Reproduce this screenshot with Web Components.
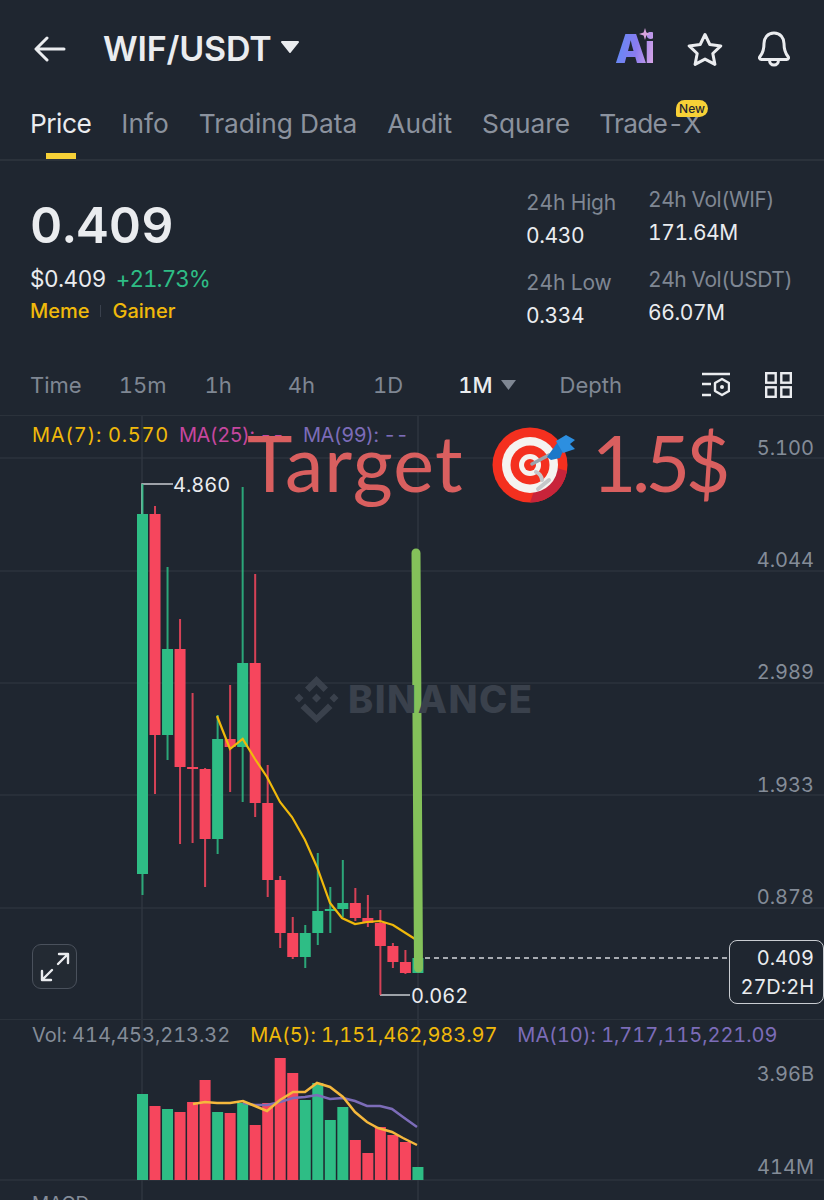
<!DOCTYPE html>
<html>
<head>
<meta charset="utf-8">
<style>
  html, body { margin: 0; height: 1200px; overflow: hidden; background: #1f2630; }
  body { font-family: Inter, "Liberation Sans", sans-serif; color: #eaecef; font-variant-numeric: tabular-nums; }
</style>
</head>
<body>
<market-header></market-header>
<market-tabs>
  <span class="on">Price</span><span>Info</span><span>Trading Data</span><span>Audit</span><span>Square</span><span class="tight">Trade-X</span>
</market-tabs>
<price-summary></price-summary>
<interval-bar></interval-bar>
<candle-chart></candle-chart>
<volume-chart></volume-chart>

<script>
class MarketHeader extends HTMLElement {
  connectedCallback() {
    this.attachShadow({ mode: "open" }).innerHTML = `
      <style>
        :host { display: flex; align-items: center; height: 97px; padding-left: 34px; box-sizing: border-box; }
        .title { font-size: 34px; font-weight: 600; margin-left: 37px; letter-spacing: -0.2px; }
        .caret { margin-left: 10px; margin-top: -3px; }
        .right { margin-left: auto; display: flex; align-items: center; padding-right: 33px; }
        .ai { position: relative; width: 38px; height: 34px; margin-right: 34px; }
        .ai b { display: block; font-size: 40px; line-height: 34px; font-weight: 900; letter-spacing: -2px;
          background: linear-gradient(100deg, #5b8cf5, #8a7bf0 55%, #d9a6e6); -webkit-background-clip: text; background-clip: text; color: transparent; }
        .ai svg { position: absolute; right: 2px; top: -4px; }
        svg { display: block; }
      </style>
      <svg width="32" height="26" viewBox="0 0 32 26" fill="none" stroke="#eaecef" stroke-width="3" stroke-linecap="round" stroke-linejoin="round"><path d="M30 13H3M13 2 2 13l11 11"/></svg>
      <span class="title">WIF/USDT</span>
      <svg class="caret" width="18" height="12" viewBox="0 0 18 12"><path d="M1 0h16a1 1 0 0 1 .8 1.6l-8 9.8a1 1 0 0 1-1.6 0L.2 1.6A1 1 0 0 1 1 0z" fill="#eaecef"/></svg>
      <div class="right">
        <div class="ai"><b>Ai</b><svg width="12" height="12" viewBox="0 0 12 12"><path d="M6 0l1.4 4.6L12 6 7.400 7.400 6 12 4.600 7.400 0 6l4.600-1.400z" fill="#d7a3dc"/></svg></div>
        <svg width="36" height="34" viewBox="0 0 36 34" fill="none" stroke="#eaecef" stroke-width="3" stroke-linejoin="round" style="margin-right:34px"><path d="M18 2.500l4.800 10 11 1.400-8 7.600 2.100 10.900L18 27.100 8.100 32.400l2.100-10.900-8-7.600 11-1.400z"/></svg>
        <svg width="34" height="36" viewBox="0 0 34 36" fill="none" stroke="#eaecef" stroke-width="3" stroke-linejoin="round" stroke-linecap="round"><path d="M17 2c-6.500 0-10 5-10 10.500 0 6.500-1.500 10-4 13-1 1.200-.5 3 1.500 3h25c2 0 2.500-1.800 1.500-3-2.500-3-4-6.500-4-13C27 7 23.500 2 17 2z"/><path d="M12.500 29c0 3 2 5 4.500 5s4.500-2 4.500-5"/></svg>
      </div>`;
  }
}
customElements.define("market-header", MarketHeader);

class MarketTabs extends HTMLElement {
  connectedCallback() {
    this.attachShadow({ mode: "open" }).innerHTML = `
      <style>
        :host { display: flex; gap: 30px; height: 64px; padding: 10px 0 0 30px; box-sizing: border-box; position: relative;
          border-bottom: 2px solid #2b323b; font-size: 26.300px; line-height: 34px; color: #8b929e; }
        ::slotted(.on) { color: #eaecef; letter-spacing: -0.500px; }
        ::slotted(.tight) { letter-spacing: -0.700px; margin-left: -1px; }
        .bar { position: absolute; left: 46px; bottom: 0; width: 30px; height: 6px; background: #f7d137; }
        .badge { position: absolute; left: 676px; top: 3px; width: 32px; height: 17px; line-height: 17px; border-radius: 9px 9px 9px 2px;
          background: #f7d137; color: #1f2630; font-size: 12px; font-weight: 500; text-align: center; }
      </style>
      <slot></slot><div class="bar"></div><div class="badge">New</div>`;
  }
}
customElements.define("market-tabs", MarketTabs);

class StatCell extends HTMLElement {
  connectedCallback() {
    this.attachShadow({ mode: "open" }).innerHTML = `
      <style>
        :host { display: block; height: 80px; }
        .l { font-size: 21px; line-height: 28px; color: #7f8793; letter-spacing: var(--label-ls, -0.150px); }
        .v { font-size: 21px; line-height: 28px; margin-top: 5px; color: #eaecef; letter-spacing: -0.400px; }
      </style>
      <div class="l">${this.getAttribute("label")}</div><div class="v">${this.getAttribute("value")}</div>`;
  }
}
customElements.define("stat-cell", StatCell);

class PriceSummary extends HTMLElement {
  connectedCallback() {
    this.attachShadow({ mode: "open" }).innerHTML = `
      <style>
        :host { display: grid; grid-template-columns: 497px 122px 1fr; height: 199px; box-sizing: border-box; padding-left: 30px; }
        .price { font-size: 50px; line-height: 60px; font-weight: 600; margin-top: 34px; letter-spacing: 0.200px; }
        .sub { display: flex; gap: 10px; font-size: 22.500px; line-height: 28px; margin-top: 10px; letter-spacing: -0.500px; }
        .up { color: #2ebd85; letter-spacing: -1px; }
        .tags { display: flex; align-items: center; font-size: 20px; line-height: 26px; font-weight: 500; color: #f0b90b; margin-top: 5px; }
        .sep { width: 1px; height: 12px; background: #3a414d; margin: 0 12px 0 10px; }
        .a { padding-top: 28px; margin-left: -1px; }
        .b { padding-top: 25px; margin-left: -1px; --label-ls: -0.450px; }
      </style>
      <div>
        <div class="price">0.409</div>
        <div class="sub"><span>$0.409</span><span class="up">+21.73%</span></div>
        <div class="tags"><span>Meme</span><i class="sep"></i><span>Gainer</span></div>
      </div>
      <div class="a"><stat-cell label="24h High" value="0.430"></stat-cell><stat-cell label="24h Low" value="0.334"></stat-cell></div>
      <div class="b"><stat-cell label="24h Vol(WIF)" value="171.64M"></stat-cell><stat-cell label="24h Vol(USDT)" value="66.07M"></stat-cell></div>`;
  }
}
customElements.define("price-summary", PriceSummary);

class IntervalBar extends HTMLElement {
  connectedCallback() {
    this.attachShadow({ mode: "open" }).innerHTML = `
      <style>
        :host { display: flex; align-items: center; height: 55px; padding: 0 0 5px 30px; box-sizing: border-box; font-size: 22px; color: #7f8793; }
        span { display: block; }
        .on { color: #eaecef; font-weight: 500; }
        svg { display: block; }
      </style>
      <span>Time</span>
      <span style="margin-left:37px">15m</span>
      <span style="margin-left:38px">1h</span>
      <span style="margin-left:56px">4h</span>
      <span style="margin-left:58px">1D</span>
      <span class="on" style="margin-left:55px">1M</span>
      <svg style="margin-left:8px" width="15" height="10" viewBox="0 0 15 10"><path d="M0 0h15L7.500 10z" fill="#7f8793"/></svg>
      <span style="margin-left:44px">Depth</span>
      <svg style="margin-left:auto" width="28" height="26" viewBox="0 0 28 26" fill="none" stroke="#eaecef" stroke-width="2.400"><path d="M0 2h28M0 12h9M0 23h9"/><path d="M20 7l7 4v8l-7 4-7-4v-8z" stroke-linejoin="round"/><circle cx="20" cy="15" r="2" fill="#eaecef" stroke="none"/></svg>
      <svg style="margin:0 32px 0 35px" width="27" height="26" viewBox="0 0 27 26" fill="none" stroke="#eaecef" stroke-width="2.400"><rect x="1.200" y="1.200" width="9.500" height="9.500"/><rect x="16.300" y="1.200" width="9.500" height="9.500"/><rect x="1.200" y="15.300" width="9.500" height="9.500"/><rect x="16.300" y="15.300" width="9.500" height="9.500"/></svg>`;
  }
}
customElements.define("interval-bar", IntervalBar);

// [dir, wickTop, bodyTop, bodyBottom, wickBottom]
const CANDLES = [
  ["g", 484, 514, 874, 895], ["r", 506, 514, 735, 794], ["g", 567, 649, 735, 760], ["r", 619, 649, 767, 844],
  ["r", 693, 767, 769, 843], ["r", 768, 769, 839, 887], ["g", 715, 739, 839, 854], ["r", 685, 739, 747, 792],
  ["g", 487, 663, 747, 802], ["r", 574, 663, 803, 817], ["r", 765, 803, 880, 897], ["r", 876, 880, 933, 948],
  ["r", 917, 933, 957, 959], ["g", 925, 933, 957, 968], ["g", 853, 911, 933, 945], ["g", 887, 909, 911, 933],
  ["g", 860, 903, 909, 917], ["r", 888, 903, 918, 921], ["r", 895, 918, 923, 927], ["r", 910, 923, 946, 995],
  ["r", 943, 946, 962, 968], ["r", 950, 962, 973, 974], ["g", 958, 958, 973, 973]
];
const VOLS = [1094, 1106, 1109, 1112, 1102, 1080, 1112, 1113, 1103, 1125, 1103, 1058, 1073, 1100, 1083, 1120, 1107, 1140, 1153, 1127, 1135, 1142, 1167];
const GREEN = "#2ebd85", RED = "#f6465d";
const colX = (i) => 142.5 + i * 12.52;

class CandleChart extends HTMLElement {
  connectedCallback() {
    const bars = CANDLES.map(([d, wt, bt, bb, wb], i) => {
      const x = colX(i), c = d === "g" ? GREEN : RED;
      return `<rect x="${x - 1}" y="${wt}" width="2" height="${wb - wt}" fill="${c}" opacity=".85"/>
        <rect x="${x - 5.500}" y="${bt}" width="11" height="${bb - bt}" fill="${c}"/>`;
    }).join("");
    const grid = [458, 571, 683, 795, 908].map((y) => `<path d="M0 ${y}H824"/>`).join("");
    this.attachShadow({ mode: "open" }).innerHTML = `
      <style>
        :host { display: block; position: relative; height: 605px; box-sizing: border-box; border-top: 1px solid #2b323b; border-bottom: 1px solid #2b323b; overflow: hidden; }
        svg.plot { display: block; position: absolute; left: 0; top: -1px; }
        .legend { position: absolute; left: 32px; top: 7px; display: flex; font-size: 20px; line-height: 24px; white-space: nowrap; letter-spacing: -0.500px; }
        .axis { position: absolute; right: 10px; font-size: 20px; line-height: 24px; color: #848c98; }
        .mark { position: absolute; font-size: 20px; line-height: 24px; color: #eaecef; }
        .wm { position: absolute; left: 293px; top: 259px; display: flex; align-items: center; gap: 8px; color: #3a414c; font-size: 38px; font-weight: 800; letter-spacing: 1.500px; line-height: 48px; }
        .target { position: absolute; left: 247px; top: 0; display: flex; align-items: center; font-family: Lato, sans-serif; font-size: 77px; line-height: 92px; color: #d95f5f; white-space: nowrap; }
        .last { position: absolute; left: 729px; top: 524px; width: 95px; height: 64px; box-sizing: border-box; border: 1px solid #c9ccd1; border-radius: 8px; background: #1f2630;
          font-size: 20px; line-height: 29px; text-align: right; padding: 3px 9px 0 0; }
        .expand { position: absolute; left: 32px; top: 528px; width: 45px; height: 45px; box-sizing: border-box; border: 1px solid #4a515c; border-radius: 9px; background: #232a33; display: flex; align-items: center; justify-content: center; }
      </style>
      <svg class="plot" width="824" height="605" viewBox="0 415 824 605">
        <g stroke="#323943" stroke-width="1.200" fill="none">${grid}<path d="M142 415V1020M418 415V1020"/></g>
        <path d="M173 484H142V514" stroke="#c9ccd1" stroke-width="1.500" fill="none"/>
        <path d="M410 995H380" stroke="#c9ccd1" stroke-width="1.500" fill="none"/>
        ${bars}
        <polyline points="217,716 230,749 242.700,739 255,759 267,777 280,802 292,817 305,840 317,867 330,903 342,918 355,924 367,922 380,921 393,925 415,939" fill="none" stroke="#f0b90b" stroke-width="2.200"/>
        <path d="M425 958H729" stroke="#d5d8dc" stroke-width="1.500" stroke-dasharray="5 4"/>
        <path d="M416 553L418.500 968" stroke="#84c15a" stroke-width="9" stroke-linecap="round"/>
      </svg>
      <div class="wm">
        <svg width="47" height="47" viewBox="0 0 47 47" fill="#3a414c"><path d="M23.500 0l11.500 11.500-4.500 4.500-7-7-7 7L12 11.500z M6 17.500L10.500 22 6 26.500 1.500 22z M41 17.500L45.500 22 41 26.500 36.500 22z M23.500 17.500L28 22l-4.500 4.500L19 22z M12 27.500l11.500 11.500L35 27.500l4.500 4.500L23.500 47 7.500 32z"/></svg>
        <span>BINANCE</span>
      </div>
      <div class="legend"><span style="color:#f0b90b;width:147px;letter-spacing:.7px">MA(7): 0.570</span><span style="color:#c6479f;width:124px">MA(25): --</span><span style="color:#7c6cb8">MA(99): --</span></div>
      <div class="target"><span style="letter-spacing:1.200px">Target</span>
        <svg style="margin:5px 17px 0 28px" width="83" height="76" viewBox="0 0 83 76">
          <circle cx="38" cy="38" r="37.500" fill="#f4301f"/><path d="M38 75.500A37.500 37.500 0 0 0 75 44L55 38 44 58z" fill="#c8243a"/>
          <circle cx="38" cy="38" r="28" fill="#f5f3f0"/><circle cx="38" cy="38" r="19.500" fill="#f4301f"/><circle cx="38" cy="38" r="11" fill="#f5f3f0"/><circle cx="38" cy="38" r="6" fill="#f4301f"/>
          <path d="M44 45a10 10 0 0 1 6 8M46 62l11-9" stroke="#c5c7ca" stroke-width="4" fill="none" stroke-linecap="round"/>
          <path d="M40 37L57 28" stroke="#9aa3ac" stroke-width="3.500" stroke-linecap="round"/>
          <path d="M55 30L68 12l8 4-5 8-3 7-9 2z" fill="#1c78c9"/><path d="M64 14l10-6 9 5-5 4 5 5-12 4z" fill="#2c8fe0"/>
        </svg>
        <span style="letter-spacing:-4.500px">1.5$</span></div>
      <div class="axis" style="top:20px">5.100</div>
      <div class="axis" style="top:132px">4.044</div>
      <div class="axis" style="top:244px">2.989</div>
      <div class="axis" style="top:357px">1.933</div>
      <div class="axis" style="top:469px">0.878</div>
      <div class="mark" style="left:173px;top:57px">4.860</div>
      <div class="mark" style="left:411px;top:568px">0.062</div>
      <div class="last">0.409<br>27D:2H</div>
      <div class="expand"><svg width="30" height="30" viewBox="0 0 30 30" fill="none" stroke="#eaecef" stroke-width="2.400" stroke-linecap="round" stroke-linejoin="round"><path d="M12 18L2 28M2 19v9h9M18 12L28 2M19 2h9v9"/></svg></div>`;
  }
}
customElements.define("candle-chart", CandleChart);

class VolumeChart extends HTMLElement {
  connectedCallback() {
    const bars = VOLS.map((top, i) => {
      const c = CANDLES[i][0] === "g" ? GREEN : RED;
      return `<rect x="${colX(i) - 5.500}" y="${top}" width="11" height="${1180 - top}" fill="${c}"/>`;
    }).join("");
    this.attachShadow({ mode: "open" }).innerHTML = `
      <style>
        :host { display: block; position: relative; height: 180px; overflow: hidden; }
        svg { display: block; position: absolute; left: 0; top: 0; }
        .legend { position: absolute; left: 32px; top: 3px; display: flex; gap: 20px; font-size: 20px; line-height: 24px; white-space: nowrap; letter-spacing: -0.050px; }
        .axis { position: absolute; right: 10px; font-size: 20px; line-height: 24px; color: #848c98; }
        .macd { position: absolute; left: 32px; top: 172px; font-size: 19px; line-height: 24px; color: #848c98; }
      </style>
      <svg width="824" height="180" viewBox="0 1020 824 180">
        <g stroke="#323943" stroke-width="1.200" fill="none"><path d="M0 1180H824M142 1020V1200M418 1020V1200"/></g>
        ${bars}
        <polyline points="243,1103 255,1105 267,1105 280,1102 293,1098 305,1097 317,1095 330,1099 343,1098 355,1101 367,1106 380,1106 392,1109 403,1117 417,1127" fill="none" stroke="#7c6cb8" stroke-width="2.500"/>
        <polyline points="193,1104 205,1102 217,1103 230,1103 243,1101 255,1106 267,1111 280,1100 293,1092 305,1092 317,1083 330,1087 343,1097 355,1112 367,1122 378,1128 392,1132 403,1138 417,1145" fill="none" stroke="#f5b83d" stroke-width="2.500"/>
      </svg>
      <div class="legend"><span style="color:#848c98">Vol: 414,453,213.32</span><span style="color:#f0b90b">MA(5): 1,151,462,983.97</span><span style="color:#7c6cb8">MA(10): 1,717,115,221.09</span></div>
      <div class="axis" style="top:42px">3.96B</div>
      <div class="axis" style="top:135px">414M</div>
      <div class="macd">MACD</div>`;
  }
}
customElements.define("volume-chart", VolumeChart);
</script>
</body>
</html>
